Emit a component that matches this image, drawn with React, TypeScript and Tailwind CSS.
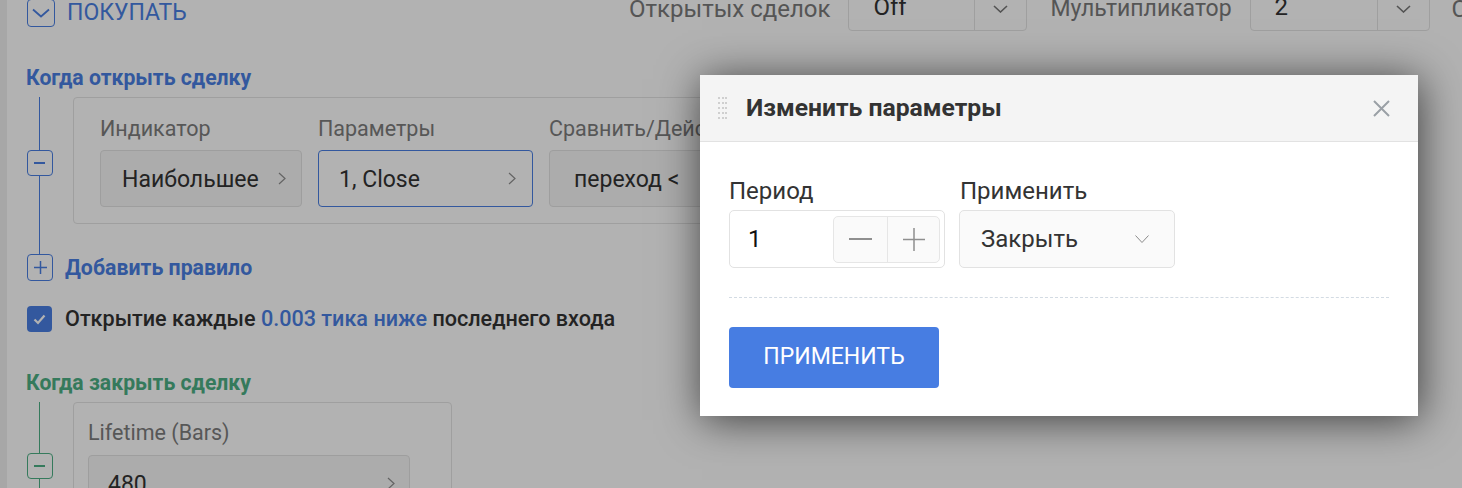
import React from "react";

function ChevronRight() {
  return (
    <svg width="8" height="13" viewBox="0 0 8 13" className="text-[#8f8f8f]">
      <path d="M1 1l6 5.5L1 12" fill="none" stroke="currentColor" strokeWidth="1.2" />
    </svg>
  );
}

function ChevronDownSmall() {
  return (
    <svg width="15" height="8" viewBox="0 0 15 8" className="text-[#777]">
      <path d="M1 1l6.5 6L14 1" fill="none" stroke="currentColor" strokeWidth="1.6" />
    </svg>
  );
}

function TopSelect({ value, width, valueWidth }: { value: string; width: string; valueWidth: string }) {
  return (
    <div className={`${width} ml-[18px] h-[44px] shrink-0 flex border border-[#e4e4e4] rounded-[4px] bg-white`}>
      <div className={`${valueWidth} pl-[24px] pb-[5px] flex items-center text-[24px] text-[#333]`}>{value}</div>
      <div className="flex-1 border-l border-[#e4e4e4] flex items-center justify-center">
        <ChevronDownSmall />
      </div>
    </div>
  );
}

function Field({ label, value, w, selected, pl, pr }: { label: string; value: string; w: string; selected?: boolean; pl: string; pr: string }) {
  return (
    <div className={`${w} shrink-0 flex flex-col`}>
      <div className="text-[21.5px] leading-[26px] text-[#7d7d7d] whitespace-nowrap">{label}</div>
      <div
        className={`mt-[8px] h-[57px] rounded-[4px] flex items-center justify-between ${pl} ${pr} ${
          selected ? "border border-[#4a7fe3] bg-white" : "border border-[#e3e3e3] bg-[#f6f6f6]"
        }`}
      >
        <span className="text-[23px] leading-[30px] pt-[2px] text-[#333] whitespace-nowrap">{value}</span>
        <ChevronRight />
      </div>
    </div>
  );
}

export default function App() {
  return (
    <div className="relative w-[1462px] h-[488px] overflow-hidden bg-white font-['Roboto','Noto_Sans',sans-serif]">
      {/* background page */}
      <div className="flex h-full">
        <div className="w-[7px] h-full bg-[#f0f0f0] shrink-0" />
        <div className="pl-[19px] flex flex-col">
          {/* top row */}
          <div className="-mt-[13px] h-[44px] flex items-start whitespace-nowrap">
            <div className="w-[603px] shrink-0 pl-[1px] mt-[12px] flex items-center gap-[12px]">
              <div className="w-[28px] h-[28px] border-[1.5px] border-[#4a7fe3] rounded-[4px] flex items-center justify-center">
                <svg width="18" height="10" viewBox="0 0 18 10" className="text-[#4a7fe3]">
                  <path d="M1 1.5l8 7 8-7" fill="none" stroke="currentColor" strokeWidth="1.8" />
                </svg>
              </div>
              <span className="text-[23px] leading-[28px] text-[#4a7fe3]">ПОКУПАТЬ</span>
            </div>
            <div className="flex items-center h-[44px] shrink-0">
              <span className="text-[24px] text-[#7a7a7a]">Открытых сделок</span>
              <TopSelect value="Off" width="w-[179px]" valueWidth="w-[125px]" />
              <span className="ml-[23px] text-[23px] text-[#7a7a7a]">Мультипликатор</span>
              <TopSelect value="2" width="w-[180px]" valueWidth="w-[126px]" />
              <span className="ml-[22px] text-[24px] text-[#7a7a7a]">Стоп</span>
            </div>
          </div>

          {/* open section */}
          <div className="mt-[35px] text-[21.2px] leading-[24px] font-bold text-[#4a7fe3] whitespace-nowrap">Когда открыть сделку</div>
          <div className="flex mt-[7px]">
            <div className="w-[27px] shrink-0 flex flex-col items-center">
              <div className="w-px h-[53px] bg-[#4a7fe3]" />
              <div className="w-[26px] h-[26px] shrink-0 border-[1.5px] border-[#4a7fe3] rounded-[4px] flex items-center justify-center">
                <div className="w-[11px] h-[1.5px] bg-[#4a7fe3]" />
              </div>
              <div className="w-px flex-1 bg-[#4a7fe3]" />
            </div>
            <div className="ml-[20px] mb-[30px] w-[900px] shrink-0 border border-[#e4e4e4] rounded-[4px] pl-[26px] pt-[18px] pb-[16px]">
              <div className="flex gap-[16px]">
                <Field label="Индикатор" value="Наибольшее" w="w-[202px]" pl="pl-[21px]" pr="pr-[15px]" />
                <Field label="Параметры" value="1, Close" w="w-[215px]" selected pl="pl-[20px]" pr="pr-[16px]" />
                <Field label="Сравнить/Действие" value="переход <" w="w-[215px]" pl="pl-[24px]" pr="pr-[16px]" />
              </div>
            </div>
          </div>

          <div className="flex items-center h-[27px]">
            <div className="ml-[1px] w-[26px] h-[27px] border-[1.5px] border-[#4a7fe3] rounded-[4px] flex items-center justify-center">
              <svg width="13" height="13" viewBox="0 0 13 13" className="text-[#4a7fe3]">
                <path d="M6.5 0v13M0 6.5h13" fill="none" stroke="currentColor" strokeWidth="1.5" />
              </svg>
            </div>
            <span className="ml-[12px] text-[21.3px] font-bold text-[#4a7fe3] whitespace-nowrap">Добавить правило</span>
          </div>

          <div className="flex items-center h-[26px] mt-[25px]">
            <div className="ml-[1px] w-[25px] h-[26px] bg-[#4a7fe3] rounded-[4px] flex items-center justify-center">
              <svg width="13" height="11" viewBox="0 0 13 11" className="text-white">
                <path d="M1.5 5.5l3.5 3.5 6.5-7.5" fill="none" stroke="currentColor" strokeWidth="2.2" />
              </svg>
            </div>
            <span className="ml-[13px] text-[21.6px] font-medium text-[#333] whitespace-nowrap">
              Открытие каждые <span className="text-[#4a7fe3]">0.003 тика ниже</span> последнего входа
            </span>
          </div>

          {/* close section */}
          <div className="mt-[39px] text-[21.2px] leading-[24px] font-bold text-[#4caf85] whitespace-nowrap">Когда закрыть сделку</div>
          <div className="flex mt-[7px]">
            <div className="w-[27px] shrink-0 flex flex-col items-center">
              <div className="w-px h-[51px] bg-[#4caf85]" />
              <div className="w-[26px] h-[26px] shrink-0 border-[1.5px] border-[#4caf85] rounded-[4px] flex items-center justify-center">
                <div className="w-[11px] h-[1.5px] bg-[#4caf85]" />
              </div>
              <div className="w-px h-[40px] bg-[#4caf85]" />
            </div>
            <div className="ml-[20px] w-[379px] h-[120px] shrink-0 border border-[#e4e4e4] rounded-[4px] pl-[14px] pt-[17px]">
              <div className="text-[21.5px] leading-[26px] text-[#7d7d7d] whitespace-nowrap">Lifetime (Bars)</div>
              <div className="mt-[9px] w-[322px] h-[57px] border border-[#e3e3e3] bg-[#f6f6f6] rounded-[4px] flex items-center justify-between pl-[19px] pr-[14px]">
                <span className="text-[23px] leading-[30px] pt-[2px] text-[#333]">480</span>
                <ChevronRight />
              </div>
            </div>
          </div>
        </div>
      </div>

      {/* overlay */}
      <div className="absolute inset-0 bg-black/30" />

      {/* modal */}
      <div className="absolute left-[700px] top-[75px] w-[718px] bg-white shadow-[2px_4px_40px_rgba(0,0,0,0.65)]">
        <div className="h-[67px] bg-[#f4f4f4] border-b border-[#e2e2e2] flex items-center pl-[18px] pr-[28px]">
          <div className="grid grid-cols-3 gap-x-[1.5px] gap-y-[3px]">
            {Array.from({ length: 15 }).map((_, i) => (
              <div key={i} className="w-[2px] h-[2px] bg-[#cfcfcf]" />
            ))}
          </div>
          <span className="ml-[19px] text-[24.7px] font-bold text-[#333] whitespace-nowrap">Изменить параметры</span>
          <svg width="17" height="17" viewBox="0 0 17 17" className="ml-auto text-[#9aa0a6]">
            <path d="M1 1l15 15M16 1L1 16" fill="none" stroke="currentColor" strokeWidth="2" />
          </svg>
        </div>
        <div className="px-[29px] pt-[35px] pb-[28px]">
          <div className="flex gap-[14px]">
            <div className="flex flex-col">
              <div className="text-[24px] leading-[28px] text-[#333]">Период</div>
              <div className="mt-[5px] w-[216px] h-[58px] border border-[#e2e2e2] rounded-[5px] bg-white flex items-center pl-[18px] pr-[4px]">
                <span className="text-[24px] text-[#111]">1</span>
                <div className="ml-auto w-[107px] h-[47px] border border-[#e6e6e6] rounded-[5px] bg-[#fafafa] flex">
                  <div className="w-[54px] h-full border-r border-[#e6e6e6] flex items-center justify-center">
                    <div className="w-[23px] h-[1.5px] bg-[#8f8f8f]" />
                  </div>
                  <div className="flex-1 h-full flex items-center justify-center">
                    <svg width="22" height="23" viewBox="0 0 22 23" className="text-[#8f8f8f]">
                      <path d="M11 0v23M0 11.5h22" fill="none" stroke="currentColor" strokeWidth="1.5" />
                    </svg>
                  </div>
                </div>
              </div>
            </div>
            <div className="flex flex-col">
              <div className="pl-[1px] text-[24px] leading-[28px] text-[#333]">Применить</div>
              <div className="mt-[5px] w-[216px] h-[58px] border border-[#e2e2e2] rounded-[5px] bg-[#fafafa] flex items-center justify-between pl-[21px] pr-[25px]">
                <span className="text-[24px] text-[#333]">Закрыть</span>
                <svg width="14" height="8" viewBox="0 0 14 8" className="text-[#8a8a8a]">
                  <path d="M0.5 0.5l6.5 7 6.5-7" fill="none" stroke="currentColor" strokeWidth="1" />
                </svg>
              </div>
            </div>
          </div>
          <div className="mt-[29px] border-t border-dashed border-[#d3dbe3]" />
          <div className="mt-[29px] w-[210px] h-[61px] bg-[#477de2] rounded-[4px] flex items-center justify-center text-[23px] text-white">
            ПРИМЕНИТЬ
          </div>
        </div>
      </div>
    </div>
  );
}
